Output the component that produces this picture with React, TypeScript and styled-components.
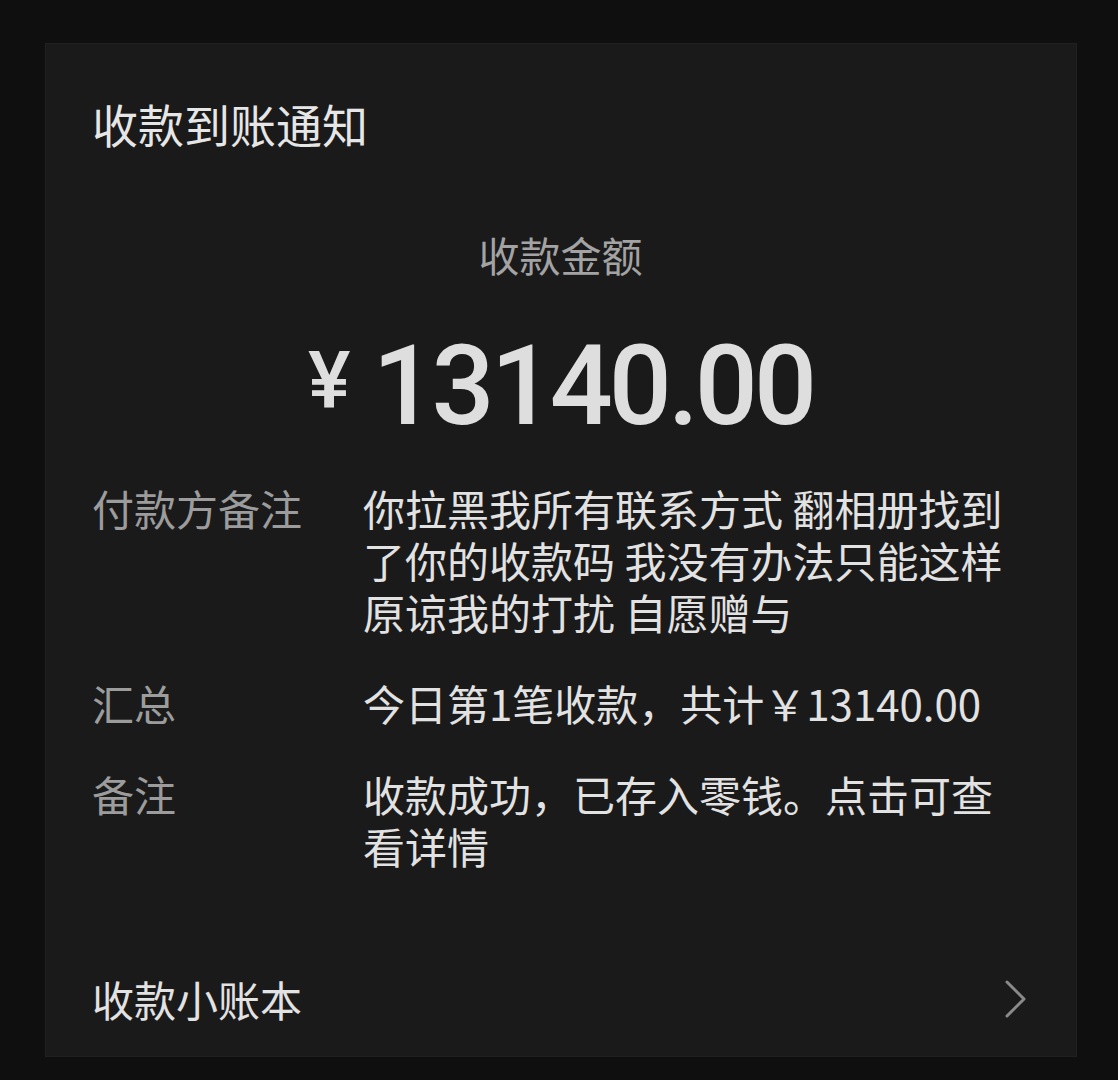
import * as React from "react";
import styled, { createGlobalStyle } from "styled-components";

const GlobalStyle = createGlobalStyle`
  html, body {
    margin: 0;
    padding: 0;
    background: #0f0f0f;
  }
  body {
    font-family: "Noto Sans CJK SC", "Noto Sans", sans-serif;
  }
`;

const Page = styled.div`
  width: 1118px;
  height: 1080px;
  padding: 43px 0 0 45px;
  box-sizing: border-box;
  background: #0f0f0f;
`;

const Card = styled.div`
  width: 1032px;
  height: 1014px;
  box-sizing: border-box;
  padding: 49px 47px 27px 46px;
  background: #1a1a1a;
  border: 1px solid #202020;
  display: flex;
  flex-direction: column;
`;

const Title = styled.div`
  font-size: 46px;
  line-height: 60px;
  color: #e6e6e6;
`;

const AmountLabel = styled.div`
  margin-top: 73px;
  text-align: center;
  font-size: 41px;
  line-height: 56px;
  color: #a3a3a3;
`;

const Amount = styled.div`
  margin-top: 39px;
  display: flex;
  justify-content: center;
  align-items: flex-start;
  height: 130px;
  color: #dedede;
  font-family: Roboto, "Liberation Sans", sans-serif;
  font-weight: 500;
`;

const Yen = styled.span`
  font-size: 80px;
  line-height: 1;
  margin-top: 20px;
  margin-right: 22px;
`;

const Digits = styled.span`
  font-size: 111px;
  line-height: 130px;
  letter-spacing: -4px;
`;

const Rows = styled.div`
  margin-top: 31px;
  display: flex;
  flex-direction: column;
  gap: 39px;
`;

const Row = styled.div`
  display: grid;
  grid-template-columns: 271px 660px;
  font-size: 42px;
  line-height: 52px;
`;

const Label = styled.div`
  color: #9c9c9c;
`;

const Value = styled.div`
  color: #e2e2e2;
`;

const Footer = styled.div`
  margin-top: auto;
  display: flex;
  align-items: center;
  justify-content: space-between;
  font-size: 42px;
  line-height: 60px;
  color: #e2e2e2;
`;

const Chevron = () => (
  <svg width="26" height="40" viewBox="0 0 26 40">
    <polyline
      points="4,3 21,20 4,37"
      fill="none"
      stroke="#8a8a8a"
      strokeWidth="3"
      strokeLinecap="round"
      strokeLinejoin="round"
    />
  </svg>
);

const rows = [
  {
    label: "付款方备注",
    value: "你拉黑我所有联系方式 翻相册找到了你的收款码 我没有办法只能这样原谅我的打扰 自愿赠与",
  },
  { label: "汇总", value: "今日第1笔收款，共计￥13140.00" },
  { label: "备注", value: "收款成功，已存入零钱。点击可查看详情" },
];

export default function App() {
  return (
    <>
      <GlobalStyle />
      <Page>
        <Card>
          <Title>收款到账通知</Title>
          <AmountLabel>收款金额</AmountLabel>
          <Amount>
            <Yen>¥</Yen>
            <Digits>13140.00</Digits>
          </Amount>
          <Rows>
            {rows.map((r) => (
              <Row key={r.label}>
                <Label>{r.label}</Label>
                <Value>{r.value}</Value>
              </Row>
            ))}
          </Rows>
          <Footer>
            <span>收款小账本</span>
            <Chevron />
          </Footer>
        </Card>
      </Page>
    </>
  );
}
